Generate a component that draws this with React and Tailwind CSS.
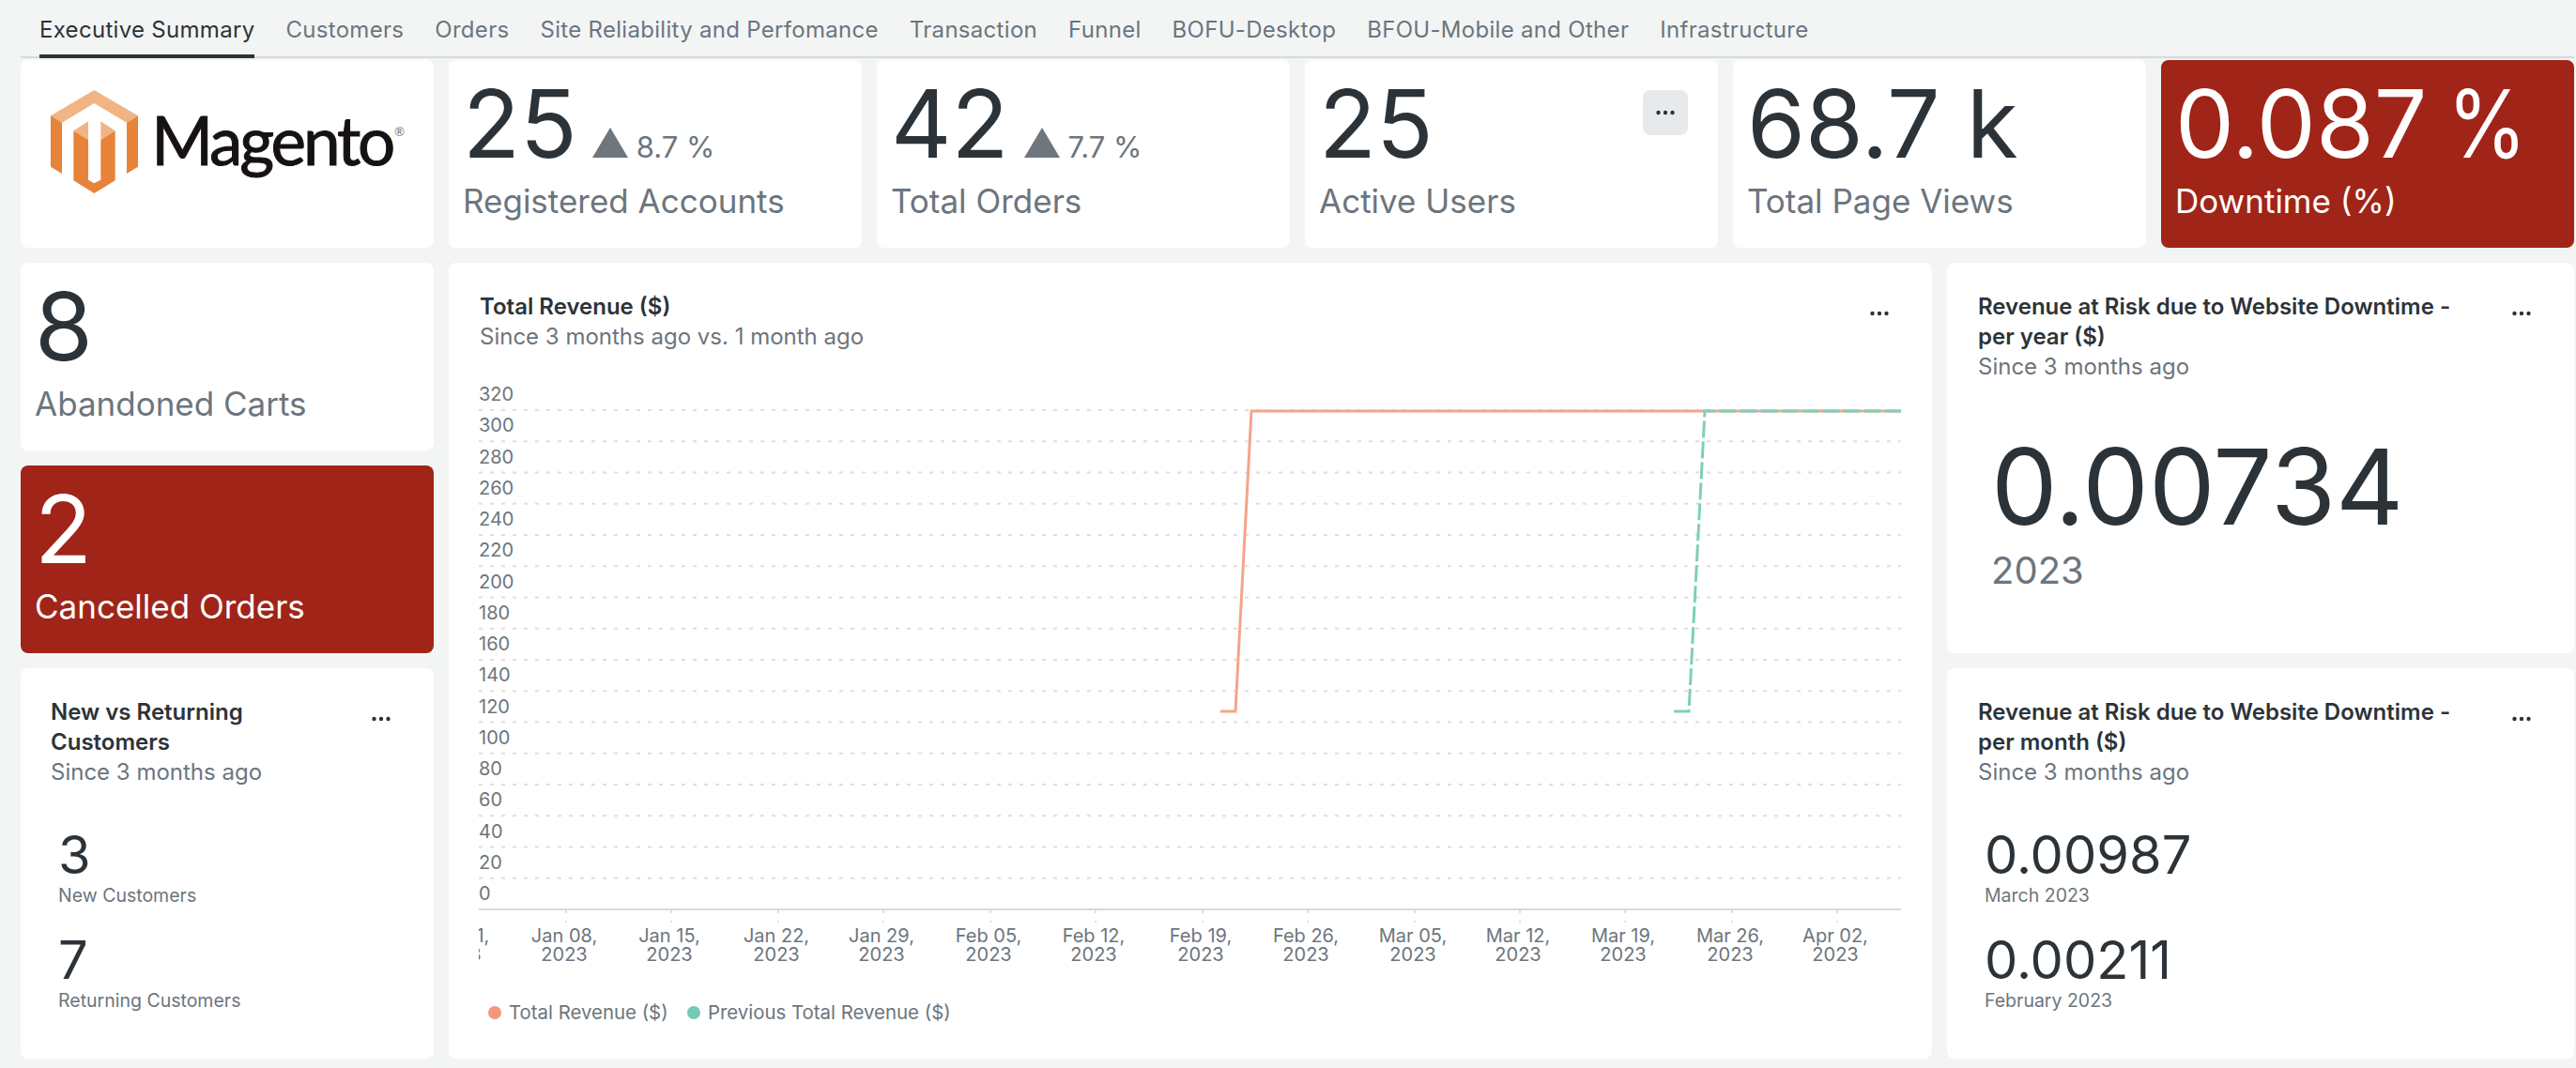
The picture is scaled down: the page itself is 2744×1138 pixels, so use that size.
import React from 'react';

const tabs = ['Executive Summary', 'Customers', 'Orders', 'Site Reliability and Perfomance', 'Transaction', 'Funnel', 'BOFU-Desktop', 'BFOU-Mobile and Other', 'Infrastructure'];

const yLabels = [320, 300, 280, 260, 240, 220, 200, 180, 160, 140, 120, 100, 80, 60, 40, 20, 0];

const xLabels = [
  ['Jan 01,', 490], ['Jan 08,', 603], ['Jan 15,', 715], ['Jan 22,', 829], ['Jan 29,', 941], ['Feb 05,', 1055], ['Feb 12,', 1167],
  ['Feb 19,', 1281], ['Feb 26,', 1393], ['Mar 05,', 1507], ['Mar 12,', 1619], ['Mar 19,', 1731], ['Mar 26,', 1845], ['Apr 02,', 1957],
];

const Dots = ({ className = 'text-[#2c3338]' }) => (
  <svg width="20" height="6" viewBox="0 0 20 6" className={className}>
    <circle cx="2.5" cy="3" r="2.2" fill="currentColor" />
    <circle cx="10" cy="3" r="2.2" fill="currentColor" />
    <circle cx="17.5" cy="3" r="2.2" fill="currentColor" />
  </svg>
);

const MagentoLogo = () => (
  <svg width="430" height="150" viewBox="0 0 1290 450" className="-ml-[2px] mt-[6px] shrink-0">
    <polygon points="102,160 241,78 381,160 345,182 241,120 138,182" fill="#f1b585" />
    <polygon points="102,160 138,182 138,345 102,323" fill="#e8833a" />
    <polygon points="381,160 345,182 345,345 381,323" fill="#e8833a" />
    <polygon points="175,208 222,178 222,237" fill="#f1b585" />
    <polygon points="262,178 308,208 262,237" fill="#f1b585" />
    <polygon points="175,208 222,237 222,365 241,376 262,365 262,237 308,208 308,367 241,408 175,367" fill="#e8833a" />
    <text x="424" y="318" fontFamily="Lato, sans-serif" fontSize="213" fill="#161213" stroke="#161213" strokeWidth="3" textLength="780" lengthAdjust="spacing">Magento</text>
    <text x="1200" y="226" fontFamily="Lato, sans-serif" fontSize="40" fill="#777777">®</text>
  </svg>
);

const Stat = ({ value, label, delta, red, menu }) => (
  <div className={`relative rounded-[8px] px-[15px] pt-[18px] ${red ? 'bg-[#a02518] text-white' : 'bg-white text-[#2c3338]'}`}>
    <div className="flex items-baseline">
      <span className="text-[100px] leading-[100px] whitespace-nowrap">{value}</span>
      {delta && (
        <>
          <svg width="38" height="32" viewBox="0 0 38 32" className="ml-[16px] fill-[#6f767d]">
            <polygon points="19,0 38,32 0,32" />
          </svg>
          <span className="ml-[9px] text-[31px] text-[#6c757d]">{delta}</span>
        </>
      )}
    </div>
    <div className={`mt-[10px] text-[35px] leading-[44px] ${red ? 'text-white' : 'text-[#6c757d]'}`}>{label}</div>
    {menu && (
      <div className="absolute right-[32px] top-[32px] flex h-[48px] w-[48px] items-center justify-center rounded-[8px] bg-[#e8e9eb]">
        <Dots />
      </div>
    )}
  </div>
);

const CardHeader = ({ title, sub, titleWidth }) => (
  <div className="flex items-start justify-between pr-[46px]">
    <div>
      <div className={`text-[24px] leading-[32px] font-semibold text-[#2c3338] ${titleWidth}`}>{title}</div>
      <div className="text-[24px] leading-[32px] text-[#6c757d]">{sub}</div>
    </div>
    <div className="mt-[20px] flex">
      <Dots />
    </div>
  </div>
);

const SmallValue = ({ value, label }) => (
  <div>
    <div className="text-[56px] leading-[56px] text-[#2c3338]">{value}</div>
    <div className="mt-[1px] text-[19.5px] leading-[28px] text-[#6c757d]">{label}</div>
  </div>
);

const RevenueChart = () => (
  <svg width="1580" height="728" viewBox="478 400 1580 728" className="block">
    <defs>
      <clipPath id="plot">
        <rect x="510" y="960" width="1530" height="80" />
      </clipPath>
    </defs>
    {yLabels.map((v, i) => {
      const y = 437 + i * 33.25;
      return (
        <g key={v}>
          <text x="510" y={y - 10} fontSize="20" fill="#6c757d">{v}</text>
          {v !== 0 && <line x1="510" x2="2025" y1={y} y2={y} stroke="#dedede" strokeWidth="2" strokeDasharray="4 8" />}
        </g>
      );
    })}
    <line x1="510" x2="2025" y1="969" y2="969" stroke="#d9d9d9" strokeWidth="2" />
    <g clipPath="url(#plot)">
      {xLabels.map(([d, x]) => (
        <g key={d}>
          <line x1={x} x2={x} y1="970" y2="983" stroke="#dedede" strokeWidth="2" strokeDasharray="3 8" />
          <text x={x - 2} y="1004" textAnchor="middle" fontSize="20" fill="#6c757d">{d}</text>
          <text x={x - 2} y="1024" textAnchor="middle" fontSize="20" fill="#6c757d">2023</text>
        </g>
      ))}
    </g>
    <polyline points="1300,758 1316,758 1333,438 2025,438" fill="none" stroke="#f4a58a" strokeWidth="3" />
    <polyline points="1783,758 1799,758 1816,438 2025,438" fill="none" stroke="#7ecfbb" strokeWidth="3" strokeDasharray="18 4" />
    <circle cx="527" cy="1079" r="7" fill="#f4977a" />
    <text x="542" y="1086" fontSize="20.4" fill="#6c757d">Total Revenue ($)</text>
    <circle cx="739" cy="1079" r="7" fill="#74c9b5" />
    <text x="754" y="1086" fontSize="20.4" fill="#6c757d">Previous Total Revenue ($)</text>
  </svg>
);

export default function App() {
  return (
    <div className="h-[1138px] w-[2744px] overflow-hidden bg-[#f3f5f5] pl-[22px] pr-[2px] font-['Inter',sans-serif]">
      {/* Tabs */}
      <div className="flex h-[62px] gap-[33px] border-b-2 border-[#d5dadd] pl-[20px]">
        {tabs.map((tab, i) => (
          <div
            key={tab}
            className={`h-[62px] whitespace-nowrap pt-[14px] text-[24px] leading-[36px] tracking-[0.3px] ${i === 0 ? 'border-b-4 border-[#2c3338] text-[#2c3338]' : 'text-[#6c757d]'}`}
          >
            {tab}
          </div>
        ))}
      </div>

      {/* Top stats */}
      <div className="mt-[2px] grid h-[200px] grid-cols-6 gap-[16px]">
        <div className="flex items-start overflow-hidden rounded-[8px] bg-white">
          <MagentoLogo />
        </div>
        <Stat value="25" label="Registered Accounts" delta="8.7 %" />
        <Stat value="42" label="Total Orders" delta="7.7 %" />
        <Stat value="25" label="Active Users" menu />
        <Stat value="68.7 k" label="Total Page Views" />
        <Stat
          value={<>0.087 <span className="inline-block origin-left scale-x-[0.86] -ml-[6px]">%</span></>}
          label="Downtime (%)"
          red
        />
      </div>

      <div className="mt-[16px] flex h-[848px] gap-[16px]">
        {/* Left column */}
        <div className="flex w-[440px] flex-col gap-[16px]">
          <div className="grid h-[200px] shrink-0">
            <Stat value="8" label="Abandoned Carts" />
          </div>
          <div className="grid h-[200px] shrink-0">
            <Stat value="2" label="Cancelled Orders" red />
          </div>
          <div className="flex-1 rounded-[8px] bg-white pl-[32px] pt-[31px]">
            <CardHeader title="New vs Returning Customers" sub="Since 3 months ago" titleWidth="w-[270px]" />
            <div className="ml-[8px] mt-[44px] flex flex-col gap-[27px]">
              <SmallValue value="3" label="New Customers" />
              <SmallValue value="7" label="Returning Customers" />
            </div>
          </div>
        </div>

        {/* Chart */}
        <div className="w-[1580px] rounded-[8px] bg-white">
          <div className="h-[120px] pl-[33px] pt-[31px]">
            <CardHeader title="Total Revenue ($)" sub="Since 3 months ago vs. 1 month ago" />
          </div>
          <RevenueChart />
        </div>

        {/* Right column */}
        <div className="flex w-[668px] flex-col gap-[16px]">
          <div className="h-[416px] rounded-[8px] bg-white pl-[33px] pt-[31px]">
            <CardHeader title="Revenue at Risk due to Website Downtime - per year ($)" sub="Since 3 months ago" titleWidth="w-[540px]" />
            <div className="ml-[14px] mt-[55px]">
              <div className="text-[112px] leading-[112px] text-[#2c3338]">0.00734</div>
              <div className="mt-[10px] text-[40px] leading-[48px] text-[#6c757d]">2023</div>
            </div>
          </div>
          <div className="h-[416px] rounded-[8px] bg-white pl-[33px] pt-[31px]">
            <CardHeader title="Revenue at Risk due to Website Downtime - per month ($)" sub="Since 3 months ago" titleWidth="w-[540px]" />
            <div className="ml-[7px] mt-[44px] flex flex-col gap-[27px]">
              <SmallValue value="0.00987" label="March 2023" />
              <SmallValue value="0.00211" label="February 2023" />
            </div>
          </div>
        </div>
      </div>
    </div>
  );
}
